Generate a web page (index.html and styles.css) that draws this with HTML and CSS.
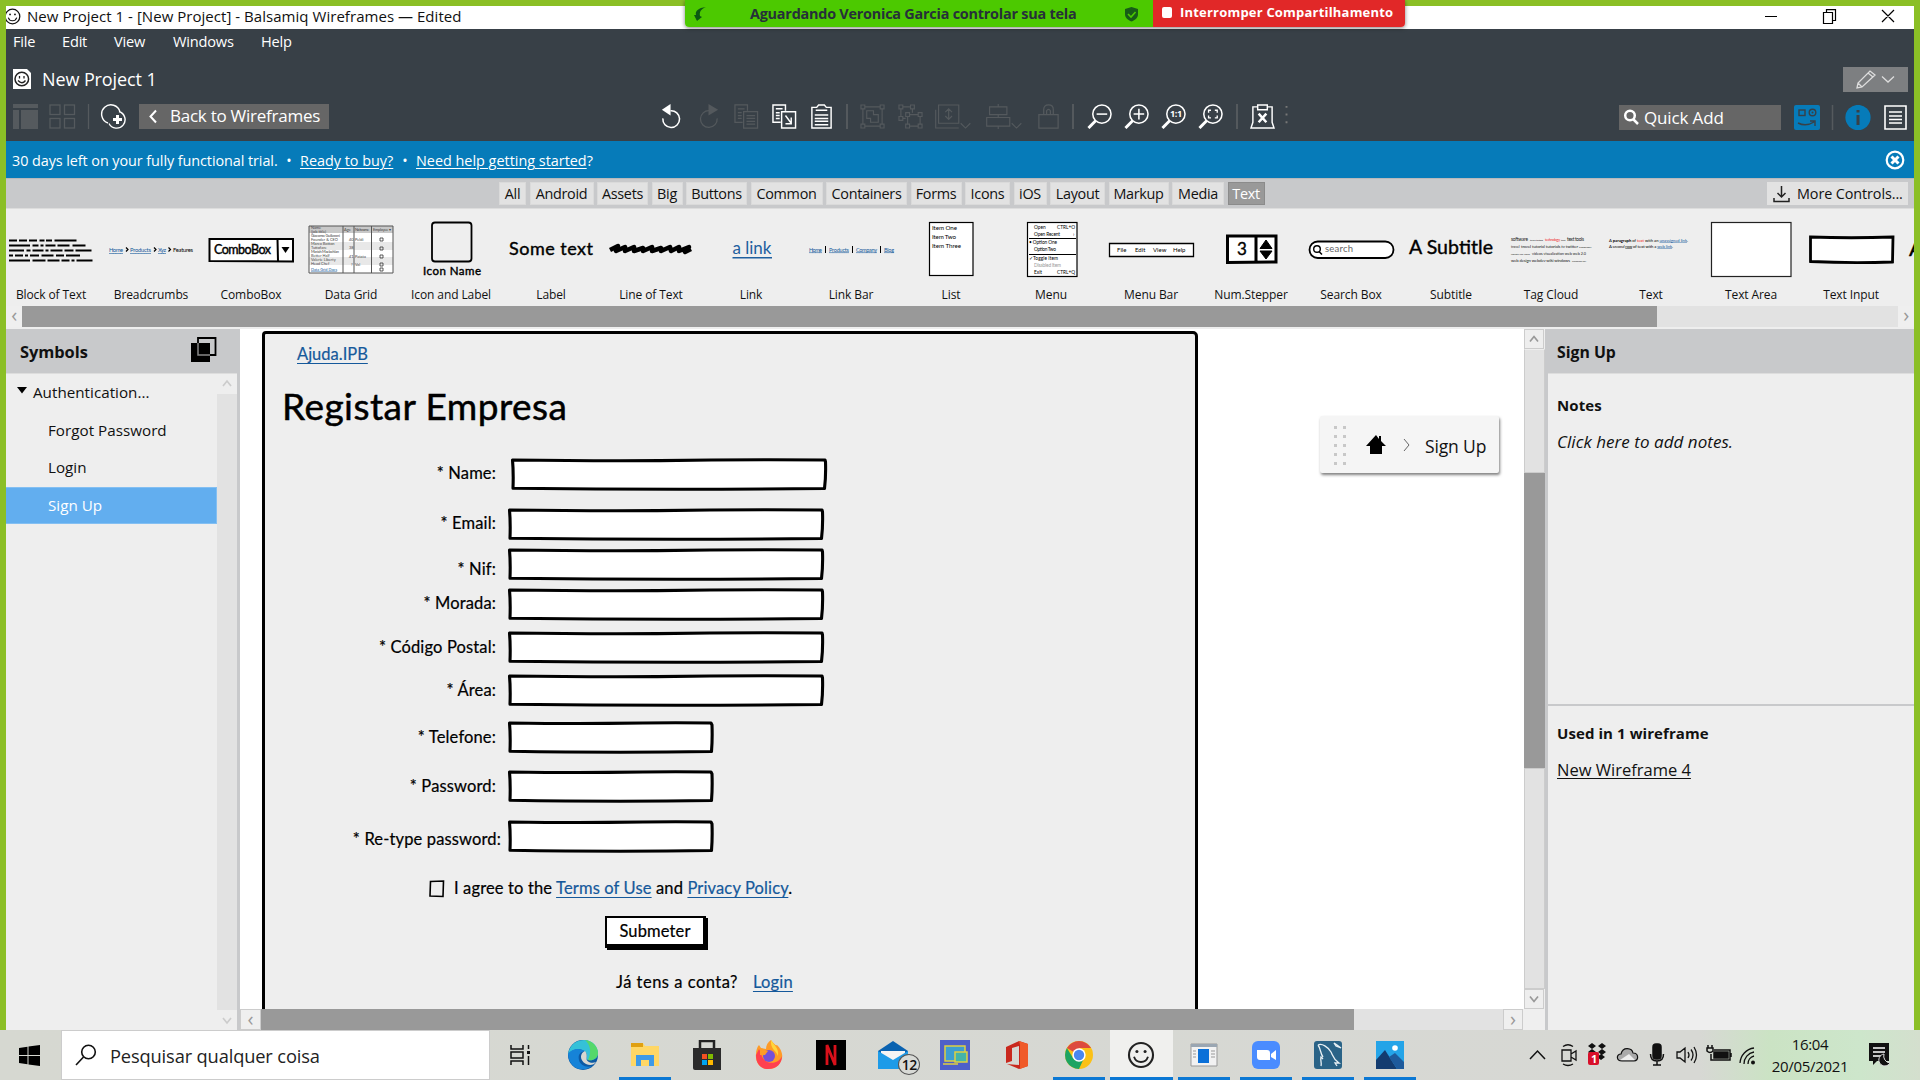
FILE: index.html
```html
<!DOCTYPE html>
<html lang="pt">
<head>
<meta charset="utf-8">
<title>New Project 1 - Balsamiq Wireframes</title>
<link rel="stylesheet" href="styles.css">
</head>
<body>
<svg class="defs" width="0" height="0">
  <symbol id="smiley" viewBox="0 0 24 24"><circle cx="12" cy="12" r="10.3" fill="none" stroke="currentColor" stroke-width="1.8"/><circle cx="8.5" cy="9" r="1.3" fill="currentColor"/><circle cx="15.5" cy="9" r="1.3" fill="currentColor"/><path d="M6 13.5C8 19.5 16 19.5 18 13.5" fill="none" stroke="currentColor" stroke-width="1.6"/></symbol>
  <symbol id="lens" viewBox="0 0 26 26"><circle cx="15.5" cy="10.500" r="9.500" fill="none" stroke="currentColor" stroke-width="1.6"/><path d="M9 17.500L1.500 25" stroke="currentColor" stroke-width="3"/></symbol>
  <symbol id="field-wide" viewBox="0 0 318 35"><path d="M2.500 3Q80 4 150 3.600Q230 2.400 315 3L315.500 5Q316 20 314.500 31.500Q160 33 3 31.300Q3.600 15 2.500 3Z" fill="#fff" stroke="#000" stroke-width="3.100" stroke-linejoin="round"/></symbol>
  <symbol id="field-short" viewBox="0 0 208 35"><path d="M2.500 3Q60 3.800 100 3.400Q160 2.400 204 3L205 5Q205.500 20 204.500 31.500Q110 33 3 31.300Q3.600 15 2.500 3Z" fill="#fff" stroke="#000" stroke-width="3.100" stroke-linejoin="round"/></symbol>
</svg>

<div class="share">
  <div class="share-wait">
    <svg width="16" height="16" viewBox="0 0 16 16"><path d="M14 1C6 2 3 5 4 9L2 9L5 15L10 11L8 10C7 6 9 3 14 1Z" fill="#0b5a12"/></svg>
    <span>Aguardando Veronica Garcia controlar sua tela</span>
    <svg width="15" height="16" viewBox="0 0 15 16"><path d="M7.500 1L14 3V8C14 12 11 14 7.500 15.500C4 14 1 12 1 8V3Z" fill="#175c17"/><path d="M4 8L7 11L11.500 6" stroke="#4cc900" stroke-width="1.600" fill="none"/></svg>
  </div>
  <div class="share-stop"><i></i><span>Interromper Compartilhamento</span></div>
</div>

<div class="desktop">
  <div class="app">
    <header class="titlebar">
      <svg class="title-face" width="17" height="17"><use href="#smiley"/></svg>
      <span class="title-text">New Project 1 - [New Project] - Balsamiq Wireframes — Edited</span>
      <svg class="winctl" width="132" height="16" viewBox="0 0 132 16"><path d="M1 7.500H13M61.500 3.500H68.500V14.500H59.500V3.500ZM62.500 3V.7H71.500V11.500H69M118 1L130 13M130 1L118 13" fill="none" stroke="#000" stroke-width="1.200"/></svg>
    </header>

    <nav class="menubar"><span class="m-file">File</span><span class="m-edit">Edit</span><span class="m-view">View</span><span class="m-win">Windows</span><span>Help</span></nav>

    <div class="project">
      <svg width="18" height="20" viewBox="0 0 18 20"><path d="M0 0H14L18 4V20H0Z" fill="#fff"/><circle cx="8.800" cy="10" r="6.800" fill="none" stroke="#222" stroke-width="1.500"/><path d="M6.500 7V9.500M11 7V9.500M5 11.500Q9 16 12.500 11.500" fill="none" stroke="#222" stroke-width="1.300"/></svg>
      <span>New Project 1</span>
      <div class="pencil"><svg width="65" height="25" viewBox="0 0 65 25" fill="none" stroke="#ddd" stroke-width="1.300"><path d="M14 21L15 16L27 4L32 8L19 20ZM25 6L30 10M15 16L19 20M39 9.500L45 15L51 9.500"/></svg></div>
    </div>

    <div class="toolbar">
      <svg class="t-left" width="126" height="26" viewBox="0 0 126 26"><path d="M0 0H25V4H0ZM0 6H6V25H0ZM8 6H25V25H8Z" fill="#555a5e"/><g fill="none" stroke="#555a5e" stroke-width="1.300"><rect x="37" y="1" width="10" height="9.500"/><rect x="51.500" y="1" width="10" height="9.500"/><rect x="37" y="14.500" width="10" height="9.500"/><rect x="51.500" y="14.500" width="10" height="9.500"/><path d="M75.500 0V25"/></g><g fill="none" stroke="#fff" stroke-width="1.400"><path d="M95 19A9.300 9.300 0 1 1 107 8M96 19.500A8.500 8.500 0 1 0 106 7.500"/><path d="M104.500 11V20M100 15.500H109" stroke-width="3"/></g></svg>
      <div class="back"><svg width="10" height="15" viewBox="0 0 10 15"><path d="M8 1.500L2.500 7.500L8 13.500" fill="none" stroke="#fff" stroke-width="2"/></svg><span>Back to Wireframes</span></div>
      <div class="tools">
        <i class="c38 on"><svg viewBox="0 0 26 26"><path d="M12 7A8.700 8.700 0 1 1 4 15" fill="none" stroke="currentColor" stroke-width="1.600"/><path d="M3 6L12 0V12Z" fill="currentColor"/></svg></i>
        <i class="c37"><svg viewBox="0 0 26 26"><path d="M14 7A8.700 8.700 0 1 0 22 15" fill="none" stroke="currentColor" stroke-width="1.300"/><path d="M23 6L13 0V12Z" fill="currentColor"/></svg></i>
        <i class="c39"><svg viewBox="0 0 26 26" fill="none" stroke="currentColor" stroke-width="1.300"><path d="M9 19H1V1H14V7M4 5H11M4 9H8M4 12H8M4 15H8M10 8H24.500V25H10ZM13 12H22M13 15H22M13 18H22M13 21H22"/></svg></i>
        <i class="c37 on"><svg viewBox="0 0 26 26" fill="none" stroke="currentColor" stroke-width="1.500"><path d="M9 19H1V1H14V7M4 5H11M4 9H8M4 12H8M4 15H8M10 8H24.500V25H10ZM14 12L20 20M20 14V20.500H14"/></svg></i>
        <i class="c37 on"><svg viewBox="0 0 26 26" fill="none" stroke="currentColor" stroke-width="1.500"><path d="M3 3.500H8L10 1H16L18 3.500H23V25H3ZM7 6.500H19M6 11.500H20M6 15H20M6 18H20M6 21.500H20"/></svg></i>
        <i class="sep c13"></i>
        <i class="c38"><svg viewBox="0 0 26 26" fill="none" stroke="currentColor" stroke-width="1.200"><path d="M3 5V21M23 5V21M5 3H21M5 23H21M1 1H5V5H1ZM21 1H25V5H21ZM1 21H5V25H1ZM21 21H25V25H21ZM7 7H14V11H19V19H11V15H7Z"/></svg></i>
        <i class="c38"><svg viewBox="0 0 26 26" fill="none" stroke="currentColor" stroke-width="1.200"><path d="M3 5V13M15 5V9M5 3H13M5 15H8M1 1H5V5H1ZM13 1H17V5H13ZM1 13H5V17H1ZM8 9H12V13H8ZM21 9H25V13H21ZM8 21H12V25H8ZM21 21H25V25H21ZM12 11H21M12 23H21M10 13V21M23 13V21"/></svg></i>
        <i class="c48"><svg class="wide" viewBox="0 0 38 26" fill="none" stroke="currentColor" stroke-width="1.200"><path d="M4 1H25V20H4ZM1 6V25H25M14.500 5V16M11 8.500L14.500 5L18 8.500M11 12.500L14.500 16L18 12.500M27 20L32 25L37 20"/></svg></i>
        <i class="c54"><svg class="wide" viewBox="0 0 38 26" fill="none" stroke="currentColor" stroke-width="1.200"><path d="M13 0V3M13 11V14M13 23V26M4 3H22V11H4ZM1 14H25V23H1ZM27 20L32 25L37 20"/></svg></i>
        <i class="c34"><svg viewBox="0 0 26 26" fill="none" stroke="currentColor" stroke-width="1.300"><path d="M3 11H23V25H3ZM8 11V6Q8 1 13 1T18 6V11M11 11V7Q13 4 15 7V11"/></svg></i>
        <i class="sep c16"></i>
        <i class="c37 on"><svg viewBox="0 0 26 26"><use href="#lens"/><path d="M10 10.500H21" stroke="#fff" stroke-width="1.600"/></svg></i>
        <i class="c37 on"><svg viewBox="0 0 26 26"><use href="#lens"/><path d="M10 10.500H21M15.500 5V16" stroke="#fff" stroke-width="1.600"/></svg></i>
        <i class="c37 on"><svg viewBox="0 0 26 26"><use href="#lens"/><text x="9.300" y="14" font-size="9.500" font-weight="700" textLength="12.500" fill="#fff">1:1</text></svg></i>
        <i class="c37 on"><svg viewBox="0 0 26 26"><use href="#lens"/><path d="M11 9V6.500H13.500M17.500 6.500H20V9M20 12V14.500H17.500M13.500 14.500H11V12" fill="none" stroke="#fff" stroke-width="1.400"/></svg></i>
        <i class="sep c16"></i>
        <i class="c35 on"><svg viewBox="0 0 26 26" fill="none" stroke="currentColor" stroke-width="1.500"><path d="M8 3H3V19L1 25H25L23 19V3H18M8 1H18V6H8Z"/><path d="M9 10L17 19M17 10L9 19" stroke-width="2.600"/></svg></i>
        <i class="c16 dots"><svg viewBox="0 0 26 26"><path d="M12 2h2v2h-2zM12 10h2v2h-2zM12 18h2v2h-2z" fill="#777"/></svg></i>
      </div>
      <div class="quick"><svg width="16" height="16" viewBox="0 0 16 16" fill="none" stroke="#fff" stroke-width="2.500"><circle cx="7" cy="6.500" r="4.800"/><path d="M10.500 10.500L15 15"/></svg><span>Quick Add</span></div>
      <svg class="t-right" width="114" height="26" viewBox="0 0 114 26"><rect width="26" height="25" rx="2" fill="#067bb9"/><g fill="none" stroke="#384047" stroke-width="1.400"><rect x="5" y="5" width="6" height="5.500"/><circle cx="18.500" cy="7.500" r="3.300"/><path d="M4 18Q12 22 20 17M16 16H21V21"/></g><circle cx="18.500" cy="7.500" r="1" fill="#384047"/><path d="M38.500 0V25" stroke="#555a5e" stroke-width="1.500"/><circle cx="64" cy="12.500" r="12.600" fill="#067bb9"/><path d="M64 10V20M64 5V7.500" stroke="#384047" stroke-width="3"/><path d="M91 1H112V24H91ZM95 7H108M95 11H108M95 14.500H108M95 18H108" fill="none" stroke="#fff" stroke-width="1.600"/></svg>
    </div>

    <div class="trial"><span class="t1">30 days left on your fully functional trial.</span><b>•</b><u class="t2">Ready to buy?</u><b>•</b><span class="t3"><u>Need help getting started</u>?</span>
      <svg width="20" height="20" viewBox="0 0 20 20"><circle cx="10" cy="10" r="8.300" fill="none" stroke="#fff" stroke-width="2.200"/><path d="M6.500 6.500L13.500 13.500M13.500 6.500L6.500 13.500" stroke="#fff" stroke-width="3"/></svg></div>

    <div class="cats">
      <span class="k1">All</span><span class="k2">Android</span><span class="k3">Assets</span><span class="k4">Big</span><span class="k5">Buttons</span><span class="k6">Common</span><span class="k7">Containers</span><span class="k8">Forms</span><span class="k9">Icons</span><span class="k10">iOS</span><span class="k11">Layout</span><span class="k12">Markup</span><span class="k13">Media</span><span class="k14 sel">Text</span>
      <div class="more"><svg width="17" height="18" viewBox="0 0 17 18" fill="none" stroke="#222" stroke-width="1.500"><path d="M8.500 1V11.500M4.500 8L8.500 12L12.500 8M1 13V16.500H16V13"/></svg><span>More Controls...</span></div>
    </div>

    <div class="palette">
      <figure><svg viewBox="0 0 100 76"><g stroke="#000" stroke-width="2.100" fill="none"><path d="M8 25.500H84" stroke-dasharray="8 2 8 2 8 2.500 5 1.500 6 2.500 22 9"/><path d="M8 30.500H86" stroke-dasharray="21 2.500 6 2 3 2 10 2 12 3 13 9"/><path d="M8 35.500H91" stroke-dasharray="15 2.500 4 2 11 2 3 2 12 2 9 2 16 9"/><path d="M8 40.500H79" stroke-dasharray="4 2 8 2 3 2 9 2.500 12 2.500 8 2 15 9"/><path d="M8 45.500H92" stroke-dasharray="21 2.500 13 2 12 2 8 2 3 2 16 9"/></g></svg><figcaption>Block of Text</figcaption></figure>
      <figure><svg viewBox="0 0 100 76" font-size="5.800"><g fill="#15599b" text-decoration="underline"><text x="8" y="37" textLength="14">Home</text><text x="29" y="37" textLength="21">Products</text><text x="57" y="37" textLength="8">Xyz</text></g><path d="M25 32.500L27 34.500L25 36.500M53 32.500L55 34.500L53 36.500M67.500 32.500L69.500 34.500L67.500 36.500" fill="none" stroke="#000" stroke-width="1.200"/><text x="72" y="37" textLength="20">Features</text></svg><figcaption>Breadcrumbs</figcaption></figure>
      <figure><svg viewBox="0 0 100 76"><path d="M8.500 24H92V46.500L8.500 46ZM76.500 24L77 46" fill="#fff" stroke="#000" stroke-width="2"/><text class="bold" x="13" y="39" font-size="12.500" textLength="57">ComboBox</text><path d="M80.500 32H88.500L84.500 38Z"/></svg><figcaption>ComboBox</figcaption></figure>
      <figure><svg viewBox="0 0 100 76" font-size="3.900"><path d="M8 11H92V58H8Z" fill="#fff"/><path d="M8 11H92V18H8Z" fill="#c8c8c8"/><path d="M8 27H92V35H8ZM8 42H92V50H8Z" fill="#e8e8e8"/><g fill="#444"><text x="10" y="14">Name</text><text x="10" y="17.500">(job title)</text><text x="10" y="22" textLength="29">Giacomo Guilizzoni</text><text x="10" y="26">Founder &amp; CEO</text><text x="10" y="30">Marco Botton</text><text x="10" y="34">Tuttofare</text><text x="10" y="38" textLength="28">Mariah Maclachlan</text><text x="10" y="42">Better Half</text><text x="10" y="46">Valerie Liberty</text><text x="10" y="50">Head Chef</text><text x="10" y="55.500" fill="#15599b" text-decoration="underline">Data Grid Docs</text><text x="43" y="16">Age</text><text x="54" y="16" textLength="14">Nickname</text><text x="72" y="16" textLength="18">Employee ▾</text><text x="48" y="26">40</text><text x="54" y="26">Peldi</text><text x="48" y="34">38</text><text x="48" y="43">41</text><text x="54" y="43">Patata</text><text x="50" y="51">?</text><text x="54" y="51">Val</text></g><path d="M8 11H92V58H8ZM42 11V58M53 11V58M70.500 11V58" fill="none" stroke="#555"/><path d="M79 23h3v3h-3zM79 32h3v3h-3zM79 40h3v3h-3zM79 48h3v3h-3zM79 53h3v3h-3z" fill="none" stroke="#333" stroke-width=".8"/></svg><figcaption>Data Grid</figcaption></figure>
      <figure><svg viewBox="0 0 100 76"><rect x="31" y="7.500" width="39.500" height="39" rx="3" fill="none" stroke="#000" stroke-width="1.800"/><text class="bold" x="22" y="60" font-size="11.500" textLength="58">Icon Name</text></svg><figcaption>Icon and Label</figcaption></figure>
      <figure><svg viewBox="0 0 100 76"><text class="bold" x="8" y="39.500" font-size="18" textLength="84">Some text</text></svg><figcaption>Label</figcaption></figure>
      <figure><svg viewBox="0 0 100 76"><path d="M9 35L17 31L15 36L24 32L24 36L33 32L33 36L42 33L42 36L51 32L51 36L60 33L60 36L69 32L70 36L78 32L78 36L88 32L84 37L90 34" fill="none" stroke="#000" stroke-width="4.500" stroke-linejoin="round"/></svg><figcaption>Line of Text</figcaption></figure>
      <figure><svg viewBox="0 0 100 76" fill="#1e5f9f"><text x="31.500" y="39" font-size="17" textLength="39">a link</text><path d="M31.500 42H71V43.500H31.500Z"/></svg><figcaption>Link</figcaption></figure>
      <figure><svg viewBox="0 0 100 76" font-size="5.500"><g fill="#15599b" text-decoration="underline"><text x="8" y="36.500" textLength="13">Home</text><text x="28" y="36.500" textLength="20">Products</text><text x="55" y="36.500" textLength="21">Company</text><text x="83" y="36.500" textLength="10">Blog</text></g><path d="M24.500 31V38M51.500 31V38M79.500 31V38" stroke="#000"/></svg><figcaption>Link Bar</figcaption></figure>
      <figure><svg viewBox="0 0 100 76" font-size="6.200"><rect x="28.500" y="7.500" width="43.500" height="53" fill="#fff" stroke="#000" stroke-width="1.200"/><text x="31" y="14.500" textLength="25">Item One</text><text x="31" y="23.500" textLength="24">Item Two</text><text x="31" y="32.500" textLength="29">Item Three</text></svg><figcaption>List</figcaption></figure>
      <figure><svg viewBox="0 0 100 76" font-size="4.800"><rect x="26.500" y="7.500" width="49.500" height="54" fill="#fff" stroke="#000" stroke-width="1.200"/><text x="33" y="13.500">Open</text><text x="56" y="13.500" textLength="18">CTRL+O</text><text x="33" y="20.500" textLength="26">Open Recent</text><text x="72" y="20.500">›</text><text x="28" y="29" textLength="28">• Option One</text><text x="33" y="36" textLength="22">Option Two</text><text x="28" y="45" textLength="29">✓Toggle Item</text><text x="33" y="52" fill="#999" textLength="27">Disabled Item</text><text x="33" y="59">Exit</text><text x="56" y="59" textLength="18">CTRL+Q</text><path d="M28 23.500H75M28 39.500H75" stroke="#000"/></svg><figcaption>Menu</figcaption></figure>
      <figure><svg viewBox="0 0 100 76" font-size="6"><path d="M8.500 28.500H92.500V41.500H8.500Z" fill="#fff" stroke="#000" stroke-width="1.300"/><text x="16" y="36.500">File</text><text x="34" y="36.500">Edit</text><text x="52" y="36.500">View</text><text x="72" y="36.500">Help</text></svg><figcaption>Menu Bar</figcaption></figure>
      <figure><svg viewBox="0 0 100 76"><path d="M26.500 21H75V47L26.500 47.500ZM55 21V48" fill="#fff" stroke="#000" stroke-width="3"/><text class="bold" x="36" y="39.500" font-size="17">3</text><path d="M59 33.500L65 25L71 33.500ZM59 36L65 44L71 36Z" stroke="#000"/></svg><figcaption>Num.Stepper</figcaption></figure>
      <figure><svg viewBox="0 0 100 76"><rect x="8.500" y="26.500" width="84" height="16.500" rx="8.200" fill="#fff" stroke="#000" stroke-width="1.800"/><circle cx="16" cy="34" r="3.300" fill="none" stroke="#000" stroke-width="1.400"/><path d="M18 36.500L21 39.500" stroke="#000" stroke-width="1.500"/><text x="24" y="37" font-size="9.500" fill="#666" textLength="28">search</text></svg><figcaption>Search Box</figcaption></figure>
      <figure><svg viewBox="0 0 100 76"><text class="bold" x="8" y="39" font-size="19.500" textLength="84">A Subtitle</text></svg><figcaption>Subtitle</figcaption></figure>
      <figure><svg viewBox="0 0 100 76" font-size="4.800" fill="#222"><text x="10" y="25.500" textLength="17">software</text><text x="29" y="25.500" font-size="2.200" textLength="13">terms testing</text><text x="44" y="25.500" font-size="3.500" fill="#e22" textLength="15">technology</text><text x="60" y="25.500" font-size="2.500">text</text><text x="66" y="25.500" textLength="17">text tools</text><text x="10" y="32.500" font-size="3.500">travel</text><text x="20" y="32.500" font-size="4.300" textLength="57">travel tutorial tutorials tv twitter</text><text x="78" y="32.500" font-size="2.500">typography</text><text x="10" y="40" font-size="2.500" textLength="19">ubuntu usa video</text><text x="31" y="40" font-size="3.800" textLength="54">videos visualization web web 2.0</text><text x="10" y="47" font-size="4.200" textLength="59">web design webdev wiki windows</text><text x="71" y="47" font-size="2.200">wordpress xml</text></svg><figcaption>Tag Cloud</figcaption></figure>
      <figure><svg viewBox="0 0 100 76" font-size="4.200"><text x="8" y="26.500" textLength="79">A <tspan font-weight="700">paragraph</tspan> of <tspan fill="#e22">text</tspan> with an <tspan fill="#15599b" text-decoration="underline">unassigned link</tspan>.</text><text x="8" y="32.500" textLength="64">A <tspan font-style="italic">second</tspan> <tspan text-decoration="underline">row</tspan> of text with a <tspan fill="#15599b" text-decoration="underline">web link</tspan>.</text></svg><figcaption>Text</figcaption></figure>
      <figure><svg viewBox="0 0 100 76"><rect x="10.500" y="7.500" width="79.500" height="54" fill="#fff" stroke="#222" stroke-width="1.200"/></svg><figcaption>Text Area</figcaption></figure>
      <figure><svg viewBox="0 0 100 76"><path d="M9.500 22Q50 23.500 92 22L91.500 47Q50 48.500 9.500 46.500Z" fill="#fff" stroke="#000" stroke-width="2.800"/></svg><figcaption>Text Input</figcaption></figure>
      <figure><svg viewBox="0 0 100 76"><text class="bold" x="8" y="41" font-size="22">A</text></svg></figure>
    </div>
    <div class="hscroll pal-scroll"><i>‹</i><div class="thumb"></div><div class="track"></div><i>›</i></div>

    <main class="main">
      <aside class="symbols">
        <div class="head"><span>Symbols</span><svg width="26" height="26" viewBox="0 0 26 26"><path d="M0 6H19V25H0Z"/><path d="M7 1H24.500V18H7Z" fill="none" stroke="#000" stroke-width="1.800"/><path d="M7 6V18H19" fill="none" stroke="#888" stroke-width="1.500"/></svg></div>
        <div class="tree-wrap">
          <div class="tree">
            <div class="node root"><svg width="10" height="7" viewBox="0 0 10 7"><path d="M0 0H10L5 6.500Z"/></svg><span>Authentication...</span></div>
            <div class="node">Forgot Password</div>
            <div class="node">Login</div>
            <div class="node active">Sign Up</div>
          </div>
          <div class="tree-scroll"><svg width="20" height="20" viewBox="0 0 20 20"><path d="M6 12L10 7L14 12" fill="none" stroke="#ccc" stroke-width="1.700"/></svg><div></div><svg width="20" height="20" viewBox="0 0 20 20"><path d="M6 8L10 13L14 8" fill="none" stroke="#ccc" stroke-width="1.700"/></svg></div>
        </div>
      </aside>

      <section class="canvas">
        <div class="canvas-top">
          <div class="board">
            <div class="wire">
              <a class="help">Ajuda.IPB</a>
              <h1>Registar Empresa</h1>
              <div class="row r1"><label>* Name:</label><svg width="318" height="35"><use href="#field-wide"/></svg></div>
              <div class="row r2"><label>* Email:</label><svg width="318" height="35"><use href="#field-wide"/></svg></div>
              <div class="row r3"><label>* Nif:</label><svg width="318" height="35"><use href="#field-wide"/></svg></div>
              <div class="row r4"><label>* Morada:</label><svg width="318" height="35"><use href="#field-wide"/></svg></div>
              <div class="row r5"><label>* Código Postal:</label><svg width="318" height="35"><use href="#field-wide"/></svg></div>
              <div class="row r6"><label>* Área:</label><svg width="318" height="35"><use href="#field-wide"/></svg></div>
              <div class="row r7"><label>* Telefone:</label><svg width="208" height="35"><use href="#field-short"/></svg></div>
              <div class="row r8"><label>* Password:</label><svg width="208" height="35"><use href="#field-short"/></svg></div>
              <div class="row r9"><label>* Re-type password:</label><svg width="208" height="35"><use href="#field-short"/></svg></div>
              <div class="agree"><svg width="16" height="18" viewBox="0 0 16 18"><path d="M1.500 1.500L14.500 1L14 16.500L1 16Z" fill="none" stroke="#000" stroke-width="1.600"/></svg><p>I agree to the <a>Terms of Use</a> and <a>Privacy Policy</a>.</p></div>
              <div class="submit">Submeter</div>
              <div class="account"><span>Já tens a conta?</span><a>Login</a></div>
            </div>
            <div class="crumb">
              <svg width="12" height="46" viewBox="0 0 12 46" fill="#c8c8c8"><path d="M0 4h3v3H0zM9 4h3v3H9zM0 13h3v3H0zM9 13h3v3H9zM0 22h3v3H0zM9 22h3v3H9zM0 31h3v3H0zM9 31h3v3H9zM0 40h3v3H0zM9 40h3v3H9z"/></svg>
              <svg class="home" width="20" height="20" viewBox="0 0 20 20"><path d="M10 0L13 4V1H15V6L20 11H16V19H4V11H0Z"/></svg>
              <svg class="chev" width="7" height="14" viewBox="0 0 7 14"><path d="M1 1L6 7L1 13" fill="none" stroke="#666" stroke-width="1"/></svg>
              <span>Sign Up</span>
            </div>
          </div>
          <div class="vscroll"><i class="up"><svg width="10" height="8" viewBox="0 0 10 8"><path d="M1 6.500L5 1.500L9 6.500" fill="none" stroke="#999" stroke-width="1.700"/></svg></i><div class="v-track"></div><div class="v-thumb"></div><div class="v-rest"></div><i class="down"><svg width="10" height="8" viewBox="0 0 10 8"><path d="M1 1.500L5 6.500L9 1.500" fill="none" stroke="#999" stroke-width="1.700"/></svg></i></div>
        </div>
        <div class="hscroll can-scroll"><i>‹</i><div class="thumb"></div><div class="track"></div><i>›</i><b></b></div>
      </section>

      <aside class="info">
        <div class="head">Sign Up</div>
        <div class="notes"><h2>Notes</h2><p>Click here to add notes.</p></div>
        <div class="used"><h2>Used in 1 wireframe</h2><a>New Wireframe 4</a></div>
      </aside>
    </main>
  </div>

  <footer class="taskbar">
    <div class="start"><svg width="21" height="21" viewBox="0 0 21 21"><path d="M0 3L8.500 1.700V10H0ZM9.500 1.500L21 0V10H9.500ZM0 11H8.500V19.300L0 18ZM9.500 11H21V21L9.500 19.500Z"/></svg></div>
    <div class="find"><svg width="22" height="22" viewBox="0 0 22 22" fill="none" stroke="#111" stroke-width="1.600"><circle cx="13.500" cy="8" r="6.800"/><path d="M8.500 13L1 21"/></svg><span>Pesquisar qualquer coisa</span></div>
    <div class="apps">
      <i><svg viewBox="0 0 30 30" fill="none" stroke="#111" stroke-width="1.500"><path d="M5 5V9H17V5M5 25V21H17V25M5 12H17V18H5ZM22.500 5V9M22.500 16V25"/><path d="M21 11H24V14H21Z" fill="#111" stroke="none"/></svg></i>
      <i><svg viewBox="0 0 30 30"><circle cx="15" cy="15" r="15" fill="#0c59a4"/><path d="M0 14C2 3 10 0 16 0C25 0 30 7 30 13C30 19 24 21 20 20C17 19 19 17 19 15C18 9 7 6 0 14Z" fill="#35c1d8"/><path d="M17 0C26 1 30 8 30 13C30 19 24 21 20 20C24 12 22 4 17 0Z" fill="#55d86a"/><path d="M0 14C4 8 12 8 17 11C11 12 10 16 11 20C12 25 18 28 24 26C15 33 1 29 0 14Z" fill="#1683d8"/><path d="M17 11C12 13 11 20 18 24C22 26 26 25 28 22C24 24 18 22 18.500 18C19 16 19 13 17 11Z" fill="#d6d7d2"/></svg></i>
      <i class="open"><svg viewBox="0 0 30 30"><path d="M1 3H13L15 6H29V26H1Z" fill="#ffd766"/><path d="M1 3H13V7H1Z" fill="#e0a012"/><path d="M6 15H24V26H19V20H11V26H6Z" fill="#3e9ae8"/></svg></i>
      <i><svg viewBox="0 0 30 30"><path d="M8 8V1H22V8" fill="none" stroke="#222" stroke-width="2.500"/><path d="M1 8H29V30H3Q1 30 1 28Z" fill="#2b2b2b"/><path d="M10 14h5v5h-5z" fill="#f25022"/><path d="M16 14h5v5h-5z" fill="#7fba00"/><path d="M10 20h5v5h-5z" fill="#00a4ef"/><path d="M16 20h5v5h-5z" fill="#ffb900"/></svg></i>
      <i><svg viewBox="0 0 30 30"><path d="M17 0C20 4 22 6 23 5C27 9 29 14 28 18C26 26 21 29 14 29C6 29 1 22 2 14C2 11 3 7 5 5L7 8L12 9C12 5 14 2 17 0Z" fill="#ff9b27"/><path d="M2 15C2 25 8 29 14 29C23 29 28 23 28 16C25 25 9 26 7 13L5 9Z" fill="#ff4050"/><circle cx="15" cy="16" r="6" fill="#7650d8"/><path d="M17 0C20 5 25 8 24 16C22 10 16 9 17 0Z" fill="#ffd53c"/><path d="M6 10L14 11L11 15L6 15Z" fill="#ff9b27"/></svg></i>
      <i><svg viewBox="0 0 30 30"><path d="M0 0H30V30H0Z"/><path d="M11 25V5L19 25V5" fill="none" stroke="#d8101a" stroke-width="2.800"/></svg></i>
      <i class="mail"><svg viewBox="0 0 30 30"><path d="M0 11L15 1L30 11V29H0Z" fill="#0a62b0"/><path d="M3 11H27V22H3Z" fill="#f4f4f4"/><path d="M0 11L15 20L30 11V29H0Z" fill="#1d9be8"/></svg><em>12</em></i>
      <i><svg viewBox="0 0 30 30"><path d="M0 0H30V30H0Z" fill="#4e5fc9"/><path d="M5 6H25V21H5ZM3 24H18" fill="#3d9ed0" stroke="#e0d040" stroke-width="1.500"/><path d="M15 12H27V22H15Z" fill="#45b4a8" stroke="#e0d040" stroke-width="1.500"/></svg></i>
      <i><svg viewBox="0 0 30 30"><path d="M17 1L26 4V26L17 29L5 24L17 25V6L10 8V21L4 23V7Z" fill="#c9281d"/><path d="M17 1L26 4V26L18 29V5Z" fill="#f05a28"/></svg></i>
      <i class="open"><svg viewBox="0 0 30 30"><circle cx="15" cy="15" r="14" fill="#fbc116"/><path d="M15 15L2.900 8A14 14 0 0 1 27.100 8H15Z" fill="#dd4b3e"/><path d="M2.900 8A14 14 0 0 0 15 29L20 18L15 15L9 18Z" fill="#1da462"/><circle cx="15" cy="15" r="6.700" fill="#fff"/><circle cx="15" cy="15" r="5.200" fill="#4a87f0"/></svg></i>
      <i class="open current"><svg viewBox="0 0 30 30" color="#222"><use href="#smiley" x="1" y="1" width="28" height="28"/></svg></i>
      <i class="open"><svg viewBox="0 0 30 30"><path d="M2 4H28V26H2Z" fill="#f2f2f2" stroke="#999"/><path d="M2 4H28V7H2Z" fill="#9aa6b2"/><path d="M9 9H20V23H9Z" fill="#0a70d8"/><path d="M4 11H7M4 14H7M4 17H7M22 11H26M22 14H26M22 17H26" stroke="#999"/></svg></i>
      <i class="open"><svg viewBox="0 0 30 30"><rect x="1" y="1" width="28" height="28" rx="6" fill="#4a8cff"/><path d="M6 10H16Q19 10 19 13V20H9Q6 20 6 17ZM20 14L25 10V20L20 17Z" fill="#fff"/></svg></i>
      <i class="open"><svg viewBox="0 0 30 30"><rect x="1" y="1" width="28" height="28" rx="3" fill="#2a6387"/><path d="M8 26C9 22 7 21 8 17L10 19M5 5C9 3 15 7 18 12C20 16 20 19 26 23L22 23L24 26M5 5C8 9 7 13 10 17M21 3L23 6L28 8L24 5Z" fill="none" stroke="#e8f0f4" stroke-width="1.300"/></svg></i>
      <i class="open"><svg viewBox="0 0 30 30"><path d="M1 1H29V29H1Z" fill="#24a4e8"/><path d="M1 20L10 10L22 29H1Z" fill="#133c70"/><path d="M14 17L20 13L29 22V29H22Z" fill="#1d5a9c"/><circle cx="20" cy="8" r="2.800" fill="#fff"/></svg></i>
    </div>
    <svg class="tray" width="230" height="24" viewBox="0 0 230 24" fill="none" stroke="#111" stroke-width="1.500"><path d="M2 16L9.500 8L17 16"/><path d="M34 7H43V18H34ZM43 11L48 8V17L43 14M35 3.500Q40 0 45 3.500M35 21Q40 24 45 21" stroke-width="1.300"/><path d="M60 3L64 0L68 3L64 6ZM70 3L74 0L78 3L74 6ZM60 9L64 6L68 9L64 12ZM70 9L74 6L78 9L74 12ZM69 14L73 11L77 14L73 17Z" fill="#111" stroke="none"/><rect x="60" y="9" width="11" height="13" rx="2" fill="#d8102a" stroke="none"/><text x="63" y="19.500" font-size="11" font-weight="700" fill="#fff" stroke="none">1</text><path d="M94 18C88 18 88 11 93 11C95 3 104 5 105 10C111 10 111 18 106 18Z" fill="#aaa" stroke-width="1.200"/><path d="M92 17L101 11L107 17Z" fill="#eee" stroke="none"/><rect x="125" y="1" width="8" height="15" rx="3" fill="#111"/><path d="M122.500 11Q122.500 18 129 18T135.500 11M129 18V22M125 22H133"/><path d="M149 9H152L157 5V19L152 15H149ZM160 9Q162 12 160 15M163 6.500Q167 12 163 17.500M166 4Q171 12 166 20" stroke-width="1.300"/><path d="M186 7H202V17H183V11M203 10V14M180 2V5M184 2V5M179 5H185V8Q182 11 179 8Z"/><path d="M186 9H200V15H186Z" fill="#111"/><path d="M212 20A16 16 0 0 1 226 5M216 21A12 12 0 0 1 226 9M220 21A8 8 0 0 1 226 13" stroke-width="1.300"/><circle cx="225" cy="19.500" r="2" fill="#111" stroke="none"/></svg>
    <div class="clock"><span>16:04</span><span>20/05/2021</span></div>
    <svg class="notif" width="22" height="24" viewBox="0 0 22 24"><path d="M0 0H20V18H8L4 22V18H0Z" fill="#111"/><path d="M4 5H16M4 9H16M4 13H12" stroke="#fff" stroke-width="1.500"/><path d="M15 11A6 6 0 1 0 21 20A7 7 0 0 1 15 11Z" fill="#111" stroke="#ddd"/></svg>
  </footer>
</div>
</body>
</html>
```
FILE: styles.css
```css
* { box-sizing: border-box; }
body { margin: 0; width: 1920px; height: 1080px; overflow: hidden; font-family: "Open Sans", "Noto Sans", sans-serif; color: #111; background: #8bbf26; letter-spacing: -0.4px; }
.defs { display: block; position: absolute; }
svg { display: block; flex: none; }
span { white-space: nowrap; }
i, em { font-style: normal; }

.desktop { display: flex; flex-direction: column; height: 1080px; }
.app { display: flex; flex-direction: column; height: 1030px; padding: 6px 6px 0; }

/* floating screen-sharing bar */
.share { position: absolute; top: 0; left: 685px; display: flex; height: 27px; box-shadow: 0 1px 4px rgba(0,0,0,.5); border-radius: 0 0 4px 4px; overflow: hidden; font-weight: 700; z-index: 2; }
.share-wait { width: 468px; display: flex; align-items: center; gap: 42px; padding-left: 7px; background: #4cc900; color: #26303a; font-size: 14.4px; letter-spacing: -0.22px; }
.share-wait span { width: 326px; text-align: center; margin-right: 6px; }
.share-stop { width: 252px; display: flex; align-items: center; gap: 8px; padding: 0 0 3px 9px; background: #e12828; color: #fff; font-size: 13px; letter-spacing: .2px; }
.share-stop i { width: 10px; height: 11px; background: #fff; border-radius: 2px; }

.titlebar { height: 23px; flex: none; display: flex; align-items: center; background: #fff; font-size: 15px; letter-spacing: .04px; overflow: hidden; }
.title-face { margin: -3px 0 0 -2px; }
.title-text { margin: -4px 0 0 6px; }
.winctl { margin-left: auto; margin-right: 18px; margin-top: -2px; }

.menubar { flex: none; height: 25px; display: flex; align-items: center; padding: 0 0 2px 7px; background: #384047; color: #fff; font-size: 14.6px; letter-spacing: -.2px; }
.m-file { width: 49px; } .m-edit { width: 52px; } .m-view { width: 59px; } .m-win { width: 88px; }
.project { flex: none; height: 50px; display: flex; align-items: center; padding: 0 6px 0 7px; gap: 11px; background: #384047; color: #fff; font-size: 18px; letter-spacing: -.1px; }
.pencil { margin-left: auto; height: 25px; background: #7d7f81; }

.toolbar { flex: none; height: 37px; display: flex; align-items: flex-start; background: #384047; color: #fff; padding-left: 7px; }
.t-left { width: 126px; }
.back { width: 190px; height: 25px; display: flex; align-items: center; background: #666; padding-left: 9px; gap: 12px; font-size: 17px; letter-spacing: -.25px; }
.back span { margin-top: -3px; }
.tools { margin-left: 323px; width: 644px; flex: none; display: flex; color: #54595d; }
.tools i { flex: none; height: 25px; display: flex; justify-content: center; }
.tools svg { width: 25px; height: 25px; }
.tools svg.wide { width: 38px; }
.tools .on { color: #fff; }
.tools .sep::before { content: ""; width: 2px; height: 25px; background: #54595d; }
.c13 { width: 13px; } .c16 { width: 16px; } .c34 { width: 34px; } .c35 { width: 35px; } .c37 { width: 37px; } .c38 { width: 38px; } .c39 { width: 39px; } .c48 { width: 48px; } .c54 { width: 54px; }
.tools .dots svg { margin-right: 3px; }
.quick { margin: 1px 0 0 323px; width: 162px; height: 25px; flex: none; display: flex; align-items: center; gap: 5px; padding: 0 0 1px 4px; background: #666; font-size: 17px; letter-spacing: -.15px; }
.t-right { margin: 1px 0 0 12.500px; }

.trial { flex: none; height: 37px; display: flex; align-items: center; padding: 2px 9px 0 6px; background: #067bb9; color: #fff; font-size: 14.4px; letter-spacing: 0; }
.trial b { width: 22px; text-align: center; font-weight: 400; }
.t1 { width: 266px; letter-spacing: -.07px; } .t2 { width: 94px; }
.trial svg { margin: -2px 0 0 auto; }
u { text-underline-offset: 2px; white-space: nowrap; }

.cats { flex: none; height: 31px; display: flex; align-items: center; gap: 3.500px; padding: 0 6px 0 493px; background: #c8c9cb; border-bottom: 1px solid #ddd; border-top: 1px solid #b8b9bb; font-size: 14.400px; letter-spacing: -.3px; }
.cats > span { height: 23px; flex: none; display: flex; align-items: center; justify-content: center; background: #e2e2e2; border: 1px solid #dadada; }
.cats .sel { background: #999; color: #fff; border-color: #8b8b8b; }
.k1 { width: 27px; } .k2 { width: 64px; } .k3 { width: 51px; } .k4 { width: 31px; } .k5 { width: 61px; } .k6 { width: 72px; } .k7 { width: 81px; } .k8 { width: 51px; } .k9 { width: 45px; } .k10 { width: 33px; } .k11 { width: 55px; } .k12 { width: 60px; } .k13 { width: 52px; } .k14 { width: 37px; }
.more { margin-left: auto; width: 141px; height: 23px; display: flex; align-items: center; gap: 7px; padding-left: 6px; background: #e2e2e2; letter-spacing: -.1px; }

.palette { flex: none; height: 97px; display: flex; padding-top: 6px; background: #eee; overflow: hidden; }
.palette figure { margin: 0; width: 100px; flex: none; }
.palette figure:first-child { margin-left: -5px; }
.palette svg { width: 100px; height: 76px; font-family: Lato, sans-serif; letter-spacing: 0; }
.palette .bold { stroke: #000; stroke-width: .4px; }
.palette figcaption { margin-top: -5px; font-size: 12px; line-height: 18px; text-align: center; letter-spacing: -.1px; }

.hscroll { flex: none; display: flex; height: 21px; background: #efefef; }
.hscroll i { width: 16px; color: #999; font-size: 20px; line-height: 17px; text-align: center; }
.hscroll .thumb { background: #999; }
.hscroll .track { flex: 1; background: #e2e2e2; }
.pal-scroll .thumb { width: 1635px; }
.can-scroll i { width: 20.500px; border: 1px solid #ccc; }
.can-scroll .thumb { width: 1093px; }
.can-scroll b { width: 22px; }

.main { flex: 1; min-height: 0; display: flex; border-top: 2px solid #eee; background: #fff; }
.head { height: 45px; background: #c8c9cb; border-bottom: 1px solid #ddd; font-weight: 700; }
.symbols { width: 234px; display: flex; flex-direction: column; background: #eee; border-right: 3px solid #c8c9cb; }
.symbols .head { display: flex; justify-content: space-between; align-items: center; padding: 1px 20px 0 14px; font-size: 16.400px; letter-spacing: -.05px; }
.symbols .head svg { margin-top: -3px; }
.tree-wrap { flex: 1; display: flex; }
.tree { width: 211px; font-size: 15.200px; letter-spacing: .02px; }
.node { height: 37.500px; display: flex; align-items: center; padding: 0 0 1px 42px; }
.node.root { padding-left: 11px; gap: 6px; }
.node.root svg { margin-top: -4px; }
.node.active { background: #62aeef; color: #fff; border: 1px solid #83bff2; border-left: 0; }
.tree-scroll { flex: 1; display: flex; flex-direction: column; }
.tree-scroll div { flex: 1; background: #e2e2e2; }

.canvas { width: 1305px; display: flex; flex-direction: column; }
.canvas-top { flex: 1; min-height: 0; display: flex; }
.board { position: relative; width: 1284px; overflow: hidden; }
.wire { margin: 2px 0 0 22px; width: 936px; height: 720px; padding-left: 17px; background: #eee; border: 3px solid #000; border-radius: 4px 5px 0 0; font-family: Lato, "Open Sans", sans-serif; font-size: 16.500px; letter-spacing: .14px; color: #000; -webkit-text-stroke: .2px; }
.wire a { color: #15599b; text-decoration: underline; text-underline-offset: 3px; text-decoration-thickness: 1px; }
.help { display: block; margin: 9px 0 0 15px; height: 22px; line-height: 22px; letter-spacing: 0; }
.wire h1 { margin: 18px 0 0; height: 48px; line-height: 46px; font-size: 37px; font-weight: 400; letter-spacing: .45px; -webkit-text-stroke: .5px; }
.row { display: flex; height: 35px; }
.row label { width: 214px; margin-right: 11px; text-align: right; line-height: 32px; white-space: nowrap; }
.r1 { margin-top: 26px; } .r1 svg { margin-left: 3px; }
.r2 { margin-top: 15px; } .r3 { margin-top: 5px; } .r4 { margin-top: 5px; } .r5 { margin-top: 8px; } .r6 { margin-top: 8px; } .r7 { margin-top: 12px; } .r8 { margin-top: 14px; } .r9 { margin-top: 15px; }
.r3 label { line-height: 45px; } .r5 label, .r6 label, .r7 label { line-height: 34px; } .r8 label { line-height: 35px; }
.r9 label { width: 219px; margin-right: 6px; line-height: 41px; }
.agree { display: flex; align-items: center; gap: 9px; margin: 23px 0 0 147px; height: 24px; }
.agree p { margin: -2px 0 0; white-space: nowrap; }
.submit { margin: 15px 0 0 323px; width: 101px; height: 32px; border: 2px solid #000; border-width: 2px 3px 4px 2px; background: #fff; box-shadow: 2px 2px 0 #000; text-align: center; line-height: 27px; }
.account { display: flex; gap: 15px; margin: 21px 0 0 334px; height: 26px; line-height: 26px; letter-spacing: .5px; }
.account a { letter-spacing: .2px; }
.crumb { position: absolute; left: 1080px; top: 87px; width: 179px; height: 57px; display: flex; align-items: center; padding-left: 14px; background: #f5f5f5; border-radius: 2px; box-shadow: 1px 2px 3px rgba(0,0,0,.5); font-size: 17.500px; letter-spacing: -.15px; }
.home { margin: 0 0 0 20px; }
.chev { margin: 0 15px 0 17px; }
.crumb span { padding-top: 3px; }

.vscroll { width: 21px; display: flex; flex-direction: column; background: #eee; }
.vscroll i { height: 20px; margin-right: 1px; border: 1px solid #ccc; display: flex; align-items: center; justify-content: center; }
.v-track { height: 124px; background: #e2e2e2; border: 1px solid #ccc; border-top-color: #eee; }
.v-thumb { height: 295px; background: #999; }
.v-rest { flex: 1; background: #e2e2e2; border: 1px solid #ccc; }

.info { flex: 1; display: flex; flex-direction: column; background: #eee; border-left: 3px solid #c8c9cb; }
.info .head { padding-left: 9px; font-size: 15.800px; line-height: 46px; letter-spacing: 0; }
.info h2 { margin: 0; font-size: 15px; line-height: 20px; letter-spacing: .08px; }
.notes { height: 332px; padding: 21px 9px 0; border-bottom: 2px solid #c8c9cb; }
.notes p { margin: 15px 0 0; font-size: 17px; font-style: italic; line-height: 24px; letter-spacing: .04px; }
.used { padding: 17px 9px 0; }
.used a { display: inline-block; margin-top: 15px; font-size: 16.500px; line-height: 24px; letter-spacing: 0; text-decoration: underline; text-underline-offset: 2px; }

.taskbar { height: 50px; display: flex; align-items: center; background: linear-gradient(90deg, #d6d8d1 0, #d7d8d4 1700px, #cbe3c4 1770px, #cde6cb 1860px, #d4dfce 1920px); }
.start { width: 61px; padding-left: 19px; }
.find { width: 429px; height: 50px; display: flex; align-items: center; gap: 13px; padding-left: 13px; background: #fff; border: 1px solid #ccc; font-size: 18.300px; letter-spacing: -.15px; color: #222; }
.apps { width: 938px; display: flex; height: 50px; }
.apps i { position: relative; width: 62.050px; flex: none; display: flex; align-items: center; justify-content: center; }
.apps svg { width: 30px; height: 30px; }
.apps .open::after { content: ""; position: absolute; left: 5px; right: 5px; bottom: 0; height: 3px; background: #0b78d4; }
.apps .current { background: #f0f0ee; }
.apps .current::after { left: 0; right: 0; }
.apps em { position: absolute; left: 36px; top: 24px; width: 22px; height: 21px; border: 1px solid #555; border-radius: 50%; background: #d8dad6; font-size: 14px; line-height: 19px; text-align: center; font-weight: 600; }
.tray { margin-left: 100px; }
.clock { width: 104px; display: flex; flex-direction: column; align-items: center; font-size: 15px; line-height: 22px; letter-spacing: -.3px; }
.notif { margin-left: 7px; }
```
